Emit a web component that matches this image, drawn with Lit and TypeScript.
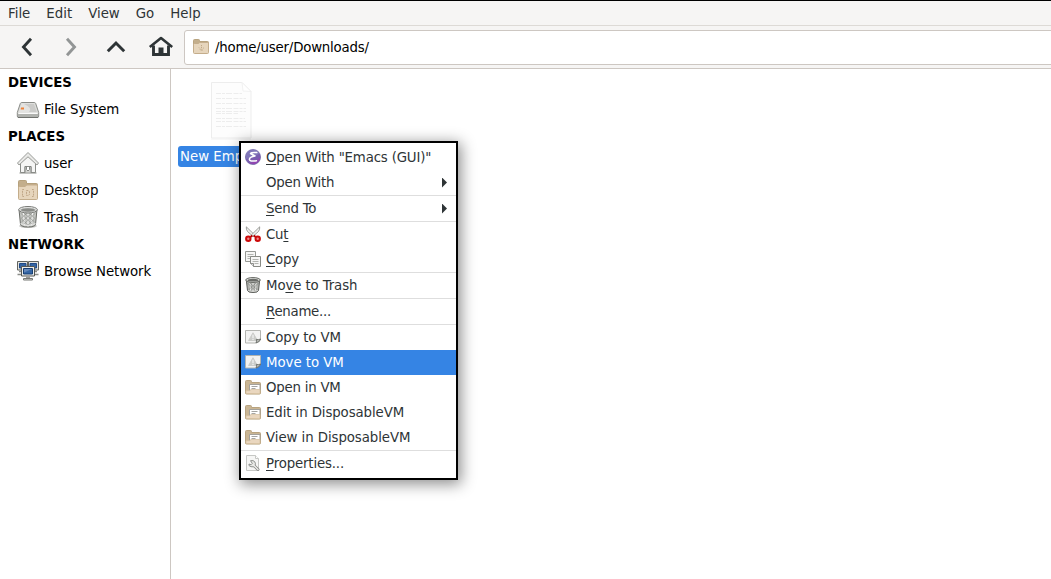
import { LitElement, html, css, svg, nothing } from "lit";
import { customElement, property } from "lit/decorators.js";
import { classMap } from "lit/directives/class-map.js";
import { styleMap } from "lit/directives/style-map.js";

const folderBody = svg`
  <path d="M.5 1.500q0-1 1-1h4.200q.8 0 .8 1v1h8q1 0 1 1v9H.5z" fill="#c3ae8c" stroke="#b8a37f"/>
  <path d="M.5 5.500q0-1 1-1h4l1.200-1h7.800q1 0 1 1v9q0 1-1 1h-13q-1 0-1-1z" fill="#e6d5bc" stroke="#c4ad8b"/>`;

const openFolder = svg`
  <path d="M.5 2.500q0-1 1-1h4q1 0 1 1v1h8q1 0 1 1v9.500q0 1-1 1h-13q-1 0-1-1z" fill="#c9b594" stroke="#b8a37f"/>
  <path d="M4.500 5.500h10.500v6h-10.500z" fill="#fff" stroke="#a3a19b"/>
  <path d="M6.500 7.500h6M6.500 9.500h4" stroke="#a5a5a2"/>
  <path d="M1 14.500v-2.800h3.500l1.500-1.200h9v3.500q0 .8-.8.800z" fill="#ead7bf" stroke="#d3bd9b" stroke-width=".7"/>`;

const vmSheet = svg`
  <path d="M.5 1.500h15v8.500l-4.500 4H.5z" fill="#f3f3f2" stroke="#b3b4b0"/>
  <path d="M8 3.800l4.400 7.700H3.600z" fill="#cbccc9" stroke="#cbccc9" stroke-linejoin="round"/>
  <path d="M8 5.800v3.200M8 9.800v1.200" stroke="#f4f4f3" stroke-width="1.200"/>
  <path d="M11 14q.9-2 .3-3.600 2 .6 4.400-.4-.6 3-4.700 4z" fill="#b4b6b1" stroke="#62645f" stroke-width=".8"/>`;

const art: Record<string, { box: string; body: unknown }> = {
  back: { box: "0 0 24 24", body: svg`<path d="M16 3.800L8.500 12l7.500 8.200" fill="none" stroke="#2e3436" stroke-width="2.900"/>` },
  forward: { box: "0 0 24 24", body: svg`<path d="M7 3.800l7.500 8.200L7 20.200" fill="none" stroke="#929595" stroke-width="2.900"/>` },
  up: { box: "0 0 24 24", body: svg`<path d="M3.800 16.200L12 8l8.200 8.200" fill="none" stroke="#2e3436" stroke-width="3"/>` },
  home: {
    box: "0 0 24 24",
    body: svg`<path d="M.8 12L12 3l11.200 9" fill="none" stroke="#2e3436" stroke-width="2.600" stroke-linejoin="round"/>
      <path d="M4.500 10.500v9h15v-9" fill="none" stroke="#2e3436" stroke-width="2.900"/><path d="M9.500 12.500h5V20h-5z" fill="#2e3436"/>`,
  },
  downloads: {
    box: "0 0 16 16",
    body: svg`${folderBody}<path d="M8.500 6v4M6 8.500l2.500 2.500L11 8.500M7 10.500l1.500 1.500 1.500-1.500" fill="none" stroke="#bba482" stroke-width=".9" stroke-dasharray="1.200 .8"/>`,
  },
  drive: {
    box: "0 0 24 24",
    body: svg`<path d="M5.700 5.500h12.600q1 0 1.400 1l3 9v3.500q0 1.500-1.200 1.500H2.500q-1.200 0-1.200-1.500v-3.500l3-9q.4-1 1.400-1z" fill="#dcddda" stroke="#8a8c88"/>
      <path d="M6 6.500h12l3.200 8.700q0 .8-1 .8H3.800q-1 0-1-.8z" fill="#e3e3e1"/>
      <path d="M8 7h10l2.800 8H13q4-4-5-8z" fill="#cbcbc9"/>
      <path d="M2.500 16.500h19" stroke="#fafafa"/><path d="M2 17h20v3H2z" fill="#b0b2ae"/>
      <path d="M2 20.500h20" stroke="#70726e"/>
      <path d="M5 10.500h3v2H4.700z" fill="#ee8138"/>`,
  },
  house: {
    box: "0 0 24 24",
    body: svg`<path d="M4.500 12v9.500h4.500v-6h6v6h4.500V12L12 5z" fill="#f5f5f4" stroke="#8a8c88"/>
      <path d="M9 21.500v-6h1.500v3l1.500 1.500 1.500-1.500v-3H15v6" fill="#d4d5d2" stroke="#7c7e7a" stroke-width=".9"/>
      <path d="M12 1.500L1.500 12l1.500 2L12 5.800l9 8.200 1.500-2z" fill="#e9e9e7" stroke="#9b9d99" stroke-linejoin="round"/>
      <path d="M3.500 22h17" stroke="#8a8c88"/>`,
  },
  desktop: {
    box: "0 0 24 24",
    body: svg`<path d="M2.500 3.500q0-1 1-1h6q1 0 1 1v2h10q1 0 1 1v12h-19z" fill="#c3ae8c" stroke="#b6a17d"/>
      <path d="M2.500 9.500q0-1 1-1h5.700l1.500-1.500h9.800q1 0 1 1v12.500q0 1-1 1h-17q-1 0-1-1z" fill="#e6d5bc" stroke="#c4ad8b"/>
      <path d="M8 11.500H6.500v7H8M16 11.500h1.500v7H16M10.500 12.500h1.500l1.500 1v3l-1.500 1h-1.500z" fill="none" stroke="#c0a788" stroke-dasharray="2 .8"/>`,
  },
  bin: {
    box: "0 0 24 24",
    body: svg`<ellipse cx="12" cy="21" rx="9" ry="2" fill="#cfcfcd"/>
      <path d="M3 4.500l1.500 15q.5 2.500 7.500 2.500t7.500-2.500L21 4.500z" fill="#c3c5c1" stroke="#6c6e69"/>
      <path d="M7.500 8l1 12.500M12 9v12.500M16.500 8l-1 12.500" stroke="#f1f1f0" stroke-width="1.200"/>
      <path d="M4.500 8l13 12.500M5.500 14l8 7.500M8 8l10.500 9M13 8l6 5.500M19.500 8l-13 12.500M18.500 14l-8 7.500M16 8L5.500 17M11 8l-6 5.500" stroke="#7d7f7b" stroke-width=".5"/>
      <path d="M4.500 18.500q7.500 4 15 0" fill="none" stroke="#e6e6e4"/>
      <ellipse cx="12" cy="4.700" rx="9.300" ry="3.200" fill="#f1f1f0" stroke="#777975"/>
      <ellipse cx="12" cy="5" rx="7.500" ry="1.900" fill="#8a8c88" stroke="#b4b6b2" stroke-width=".6"/>`,
  },
  trash: {
    box: "0 0 16 16",
    body: svg`<path d="M1.300 3l1.200 10.500q.3 2 5.500 2t5.500-2L14.700 3z" fill="#b0b2ae" stroke="#5c5e5a"/>
      <path d="M5 6l.7 8M8 6v8.500M11 6l-.7 8" stroke="#eeeeec"/>
      <path d="M2.500 6l8 8M5 6l7.500 7M13.500 6l-8 8M11 6l-7.500 7" stroke="#6b6d69" stroke-width=".5"/>
      <path d="M3 13.500q5 2 10 0" fill="none" stroke="#d9dad7" stroke-width=".8"/>
      <ellipse cx="8" cy="3" rx="7.300" ry="2.400" fill="#e3e4e1" stroke="#62645f"/>
      <ellipse cx="8" cy="3.200" rx="5.700" ry="1.400" fill="#6a6c68"/>`,
  },
  network: {
    box: "0 0 24 24",
    body: svg`<path d="M1.500 2.500h10v8.500h-10zM12.500 2.500h10v8.500h-10z" fill="#e3e4e1" stroke="#62645f"/>
      <path d="M3.500 4.500h6.500v4.500H3.500zM14 4.500h6.500v4.500H14z" fill="#3465a4" stroke="#204a87"/>
      <path d="M3 12.500h3M18 12.500h3M1.500 15.500h4.500M18 15.500h4.500" stroke="#8a8c88" stroke-width="1.600"/>
      <path d="M5.500 7.500h13v9.500h-13z" fill="#eeeeec" stroke="#555753"/>
      <path d="M7.500 9.500h9v5.500h-9z" fill="#3465a4" stroke="#173f73"/><path d="M8 10h8l-8 3.500z" fill="#6488bb"/>
      <path d="M10 17.500h4v2h-4z" fill="#999"/><path d="M7.500 19.500h9v1.500h-9z" fill="#e3e4e1" stroke="#777975"/>`,
  },
  emacs: {
    box: "0 0 16 16",
    body: svg`<circle cx="8" cy="8" r="7.600" fill="#7a5cb0" stroke="#645a9e" stroke-width=".6"/>
      <path d="M1 5.500A7.500 7.500 0 0 1 14.500 4.500Q8 9 .8 10z" fill="#8583bd" opacity=".7"/>
      <path d="M4 14Q11 13 15.300 8.500A7.500 7.500 0 0 1 4 14z" fill="#9a3fb0" opacity=".8"/>
      <path d="M11.800 3.600Q6.200 3.200 5.500 4.500l4.500 2.500Q4.800 7.800 4.300 10.300q0 2.500 7.200 1.500" fill="none" stroke="#fff" stroke-width="1.500" stroke-linecap="round" stroke-linejoin="round"/>`,
  },
  cut: {
    box: "0 0 16 16",
    body: svg`<path d="M1.300.8q-.3 2.700 1.200 4.700l5.700 5 1.300-1.700z" fill="#eeeeec" stroke="#8a8c88" stroke-width=".8"/>
      <path d="M14.700.8q.3 2.700-1.200 4.700l-5.700 5-1.300-1.700z" fill="#eeeeec" stroke="#8a8c88" stroke-width=".8"/>
      <path d="M5.300 11l2-1.500M10.700 11l-2-1.500" stroke="#b30000" stroke-width="2"/>
      <circle cx="3.300" cy="12.800" r="2.200" fill="#e88" stroke="#cc0a0a" stroke-width="2"/><circle cx="12.700" cy="12.800" r="2.200" fill="#e88" stroke="#cc0a0a" stroke-width="2"/>`,
  },
  copy: {
    box: "0 0 16 16",
    body: svg`<path d="M.5.500h10v10H.5z" fill="#f6f6f5" stroke="#969894"/><path d="M2.500 3.500h6M2.500 5.500h6M2.500 7.500h4" stroke="#b2b4b0"/>
      <path d="M5.500 5.500h10v10h-7l-3-3z" fill="#f6f6f5" stroke="#888a85"/><path d="M7.500 8.500h6M7.500 10.500h6M9.500 12.500h4" stroke="#b2b4b0"/><path d="M5.500 12.500h3v3" fill="#ddd" stroke="#777975" stroke-width=".8"/>`,
  },
  vm: { box: "0 0 16 16", body: vmSheet },
  folder: { box: "0 0 16 16", body: openFolder },
  properties: {
    box: "0 0 16 16",
    body: svg`<path d="M1.500.500h9l3 3v12h-12z" fill="#f6f6f5" stroke="#c6c7c4"/><path d="M10.500.500v3h3" fill="#fff" stroke="#c6c7c4"/>
      <path d="M8.500 10l4.500 4.500" stroke="#858783" stroke-width="3" stroke-linecap="round"/>
      <path d="M5.500 5.700q2.800-.8 4.200 1t.3 3.800-4 1.200-2-2.700l2 .8 1.300-1.400z" fill="#e6e7e4" stroke="#858783" stroke-width=".9" stroke-linejoin="round"/>
      <path d="M8.500 10l4.500 4.500" stroke="#eeeeec" stroke-width="1.300" stroke-linecap="round"/>`,
  },
  document: {
    box: "0 0 42 58",
    body: svg`<path d="M1.500.500h30.500l9 9v46.500h-39.500z" fill="#fdfdfd" stroke="#ededed"/>
      <path d="M1 57h40" stroke="#f2f2f2"/>
      <path d="M32 .500l9 9-8-.5z" fill="#fff" stroke="#efefef" stroke-width=".8"/>
      <path d="M6 11.500h26M6 16.500h30M6 21.500h30M6 26.500h30M6 29.500h30M6 31.500h22M6 36.500h29M6 39.500h30M6 44.500h30" stroke="#ededed" stroke-dasharray="5 1 3 1 6 1.500"/>`,
  },
};

@customElement("app-icon")
class AppIcon extends LitElement {
  @property() name = "";
  @property({ type: Number }) size = 16;
  @property({ type: Number }) tall = 0;
  static styles = css`
    :host { display: block; flex: none; }
    svg { display: block; overflow: visible; }
  `;
  render() {
    const a = art[this.name];
    return html`<svg width=${this.size} height=${this.tall || this.size} viewBox=${a.box} aria-hidden="true">${a.body}</svg>`;
  }
}

interface MenuEntry {
  icon?: string;
  label: string;
  key?: number;
  sub?: boolean;
  rule?: boolean;
  active?: boolean;
  track: number;
}

const entries: MenuEntry[] = [
  { icon: "emacs", label: 'Open With "Emacs (GUI)"', key: 0, track: -0.17 },
  { label: "Open With", sub: true, track: -0.2 },
  { label: "Send To", key: 0, sub: true, rule: true, track: -0.22 },
  { icon: "cut", label: "Cut", key: 2, rule: true, track: -0.2 },
  { icon: "copy", label: "Copy", key: 0, track: -0.2 },
  { icon: "trash", label: "Move to Trash", key: 2, rule: true, track: -0.12 },
  { label: "Rename...", key: 0, rule: true, track: -0.27 },
  { icon: "vm", label: "Copy to VM", rule: true, track: -0.15 },
  { icon: "vm", label: "Move to VM", active: true, track: -0.05 },
  { icon: "folder", label: "Open in VM", track: -0.22 },
  { icon: "folder", label: "Edit in DisposableVM", track: -0.1 },
  { icon: "folder", label: "View in DisposableVM", track: -0.07 },
  { icon: "properties", label: "Properties...", key: 0, rule: true, track: -0.16 },
];

@customElement("context-menu")
class ContextMenu extends LitElement {
  static styles = css`
    :host {
      display: block; box-sizing: border-box; width: 219px; padding: 2px 0;
      border: 2px solid #000; background: #fff; color: #2e3436;
      box-shadow: 2px 3px 14px 1px rgba(0, 0, 0, .45);
    }
    .item { display: flex; align-items: center; gap: 5px; height: 25px; padding: 0 9px 0 4px; white-space: pre; }
    .rule { border-top: 1px solid #dedede; }
    .active { background: #3584e4; color: #fff; }
    .slot { width: 16px; height: 16px; flex: none; margin-bottom: 1px; }
    .label { flex: 1; line-height: 25px; }
    .key { text-decoration: underline; text-underline-offset: 2px; text-decoration-thickness: 1px; text-decoration-skip-ink: none; }
    .arrow { width: 5px; height: 10px; background: #2e3436; clip-path: polygon(0 0, 100% 50%, 0 100%); }
  `;
  private label(e: MenuEntry) {
    if (e.key === undefined) return e.label;
    return html`${e.label.slice(0, e.key)}<span class="key">${e.label[e.key]}</span>${e.label.slice(e.key + 1)}`;
  }
  render() {
    return entries.map(
      (e) => html`<div class=${classMap({ item: true, rule: !!e.rule, active: !!e.active })}>
        <div class="slot">${e.icon ? html`<app-icon name=${e.icon}></app-icon>` : nothing}</div>
        <div class="label" style=${styleMap({ letterSpacing: `${e.track}px` })}>${this.label(e)}</div>
        ${e.sub ? html`<div class="arrow"></div>` : nothing}
      </div>`
    );
  }
}

const places = [
  { title: "DEVICES", rows: [["drive", "File System"]] },
  { title: "PLACES", rows: [["house", "user"], ["desktop", "Desktop"], ["bin", "Trash"]] },
  { title: "NETWORK", rows: [["network", "Browse Network"]] },
];

@customElement("app-root")
class AppRoot extends LitElement {
  static styles = css`
    :host {
      display: flex; flex-direction: column; box-sizing: border-box; width: 100%; height: 100vh; overflow: hidden;
      border-top: 1px solid #000; background: #fff; color: #000;
      font: 13.333px "DejaVu Sans", sans-serif;
    }
    .menubar {
      display: flex; gap: 16px; height: 24px; padding: 0 8px; line-height: 26px; flex: none;
      background: #f6f5f4; border-bottom: 1px solid #dddad6; color: #2e3436;
    }
    .toolbar { display: flex; height: 42px; flex: none; background: #f6f5f4; border-bottom: 1px solid #cdc7c2; overflow: hidden; }
    .buttons { display: flex; align-items: center; gap: 20.67px; padding-left: 15px; width: 169px; flex: none; }
    .path {
      display: flex; align-items: center; gap: 6px; flex: 1; box-sizing: border-box; height: 35px; margin: 4px -6px 0 0;
      padding: 0 8px 1px; background: #fff; border: 1px solid #cdc7c2; border-radius: 3px; letter-spacing: -.2px;
    }
    .main { display: flex; flex: 1; min-height: 0; }
    .side { width: 170px; flex: none; border-right: 1px solid #cdc7c2; }
    .title, .row { height: 27px; line-height: 28px; white-space: nowrap; }
    .title { padding-left: 8px; font-weight: bold; }
    .row { display: flex; gap: 4px; padding-left: 16px; letter-spacing: -.1px; }
    .pic { padding-top: 1px; }
    .files { flex: 1; padding: 13px 0 0 7px; }
    .file { display: flex; flex-direction: column; align-items: center; width: 106px; gap: 6px; }
    .name {
      height: 21px; line-height: 22px; box-sizing: border-box; width: 106px; padding: 0 2px; border-radius: 3px;
      background: #3584e4; color: #fff; white-space: nowrap;
    }
    context-menu { position: absolute; left: 239px; top: 141px; }
  `;
  render() {
    return html`
      <nav class="menubar">${["File", "Edit", "View", "Go", "Help"].map((m) => html`<span>${m}</span>`)}</nav>
      <div class="toolbar">
        <div class="buttons">${["back", "forward", "up", "home"].map((n) => html`<app-icon name=${n} size="24"></app-icon>`)}</div>
        <div class="path"><app-icon name="downloads"></app-icon><span>/home/user/Downloads/</span></div>
      </div>
      <div class="main">
        <aside class="side">
          ${places.map(
            (g) => html`<div class="title">${g.title}</div>
              ${g.rows.map(
                ([icon, label]) => html`<div class="row">
                  <div class="pic"><app-icon name=${icon} size="24"></app-icon></div>
                  <span>${label}</span>
                </div>`
              )}`
          )}
        </aside>
        <section class="files">
          <div class="file">
            <app-icon name="document" size="42" tall="58"></app-icon>
            <div class="name">New Emp</div>
          </div>
        </section>
      </div>
      <context-menu></context-menu>
    `;
  }
}
